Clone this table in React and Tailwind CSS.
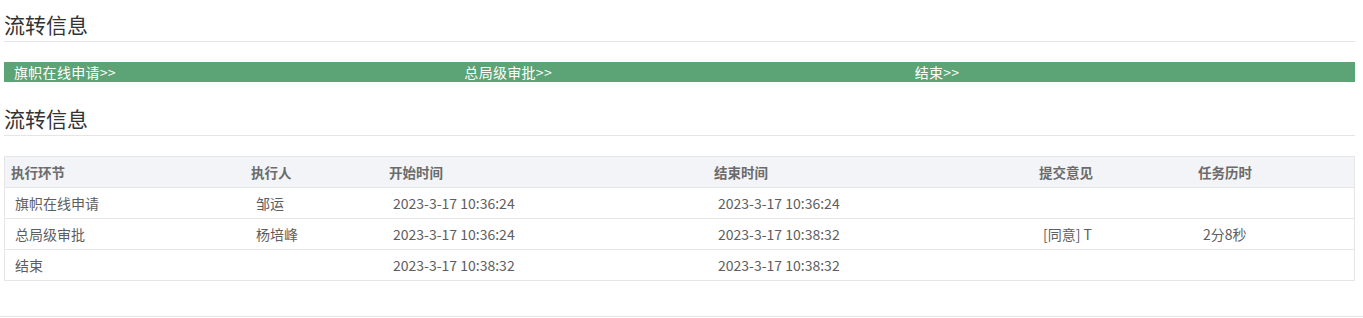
const steps = ["旗帜在线申请>>", "总局级审批>>", "结束>>"];

const rows = [
  { node: "旗帜在线申请", who: "邹运", start: "2023-3-17 10:36:24", end: "2023-3-17 10:36:24", note: "", cost: "" },
  { node: "总局级审批", who: "杨培峰", start: "2023-3-17 10:36:24", end: "2023-3-17 10:38:32", note: "[同意] T", cost: "2分8秒" },
  { node: "结束", who: "", start: "2023-3-17 10:38:32", end: "2023-3-17 10:38:32", note: "", cost: "" },
];

const cols = "grid grid-cols-[240px_138px_325px_325px_159px_1fr] items-center";

function Title({ children, className = "" }) {
  return (
    <div className={"pt-[10px] pb-[3px] text-[21px] leading-[28px] text-[#333] border-b border-[#e5e5e5] " + className}>
      {children}
    </div>
  );
}

export default function App() {
  return (
    <div className="bg-white" style={{ fontFamily: '"Noto Sans CJK SC", "Noto Sans", sans-serif' }}>
      <div className="pl-[4px] pr-[8px]">
        <Title>流转信息</Title>

        <div className="mt-[20px] grid grid-cols-3 h-[20px] bg-[#5ca375] text-white text-[14px] leading-[20px]">
          {steps.map((s) => (
            <div key={s} className="pl-[10px] tracking-[0.3px]">{s}</div>
          ))}
        </div>

        <Title className="mt-[12px]">流转信息</Title>

        <div className="mt-[20px] border border-[#e6e6e6]">
          <div className={cols + " h-[31px] bg-[#f3f4f7] border-b border-[#e6e6e6] text-[13.5px] font-bold text-[#6b6b6b]"}>
            <div className="pl-[6px]">执行环节</div>
            <div className="pl-[6px]">执行人</div>
            <div className="pl-[6px]">开始时间</div>
            <div className="pl-[6px]">结束时间</div>
            <div className="pl-[6px]">提交意见</div>
            <div className="pl-[6px]">任务历时</div>
          </div>
          {rows.map((r, i) => (
            <div
              key={r.node}
              className={cols + " text-[14px] text-[#5e5e5e] " + (i < rows.length - 1 ? "h-[31px] border-b border-[#e6e6e6]" : "h-[30px]")}
            >
              <div className="pl-[10px]">{r.node}</div>
              <div className="pl-[11px]">{r.who}</div>
              <div className="pl-[10px]">{r.start}</div>
              <div className="pl-[10px]">{r.end}</div>
              <div className="pl-[10px]">{r.note}</div>
              <div className="pl-[11px]">{r.cost}</div>
            </div>
          ))}
        </div>
      </div>

      <div className="mt-[35px] border-t border-[#e5e5e5]" />
    </div>
  );
}
